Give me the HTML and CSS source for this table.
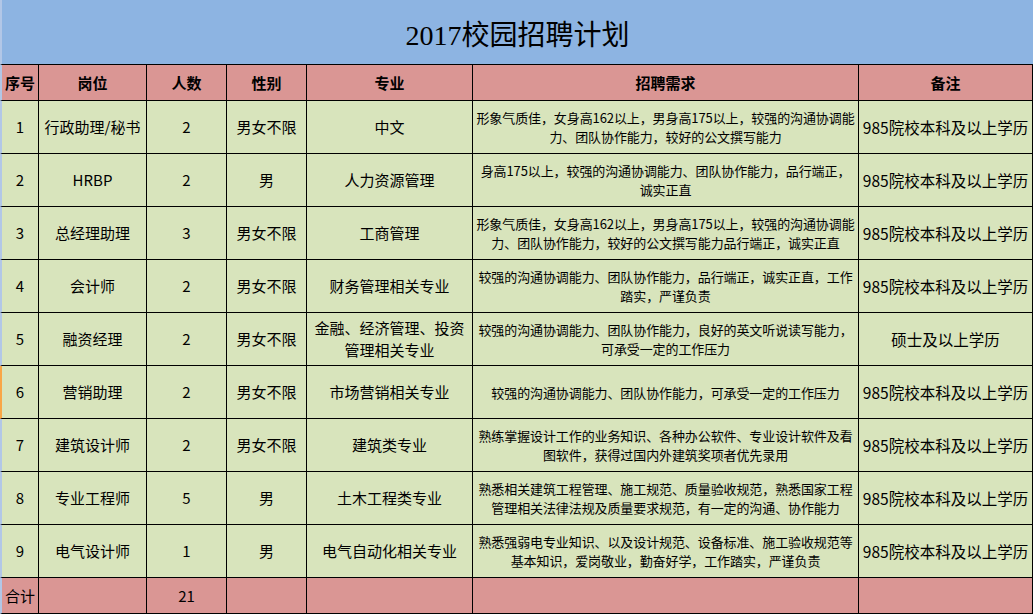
FILE: index.html
```html
<!DOCTYPE html>
<html lang="zh-CN">
<head>
<meta charset="utf-8">
<title>2017校园招聘计划</title>
<link rel="stylesheet" href="styles.css">
</head>
<body>
<div class="sheet">
  <div class="title">2017校园招聘计划</div>

  <div class="cell head first">序号</div>
  <div class="cell head">岗位</div>
  <div class="cell head">人数</div>
  <div class="cell head">性别</div>
  <div class="cell head">专业</div>
  <div class="cell head">招聘需求</div>
  <div class="cell head">备注</div>

  <div class="cell body first">1</div>
  <div class="cell body">行政助理/秘书</div>
  <div class="cell body">2</div>
  <div class="cell body">男女不限</div>
  <div class="cell body">中文</div>
  <div class="cell body req">形象气质佳，女身高162以上，男身高175以上，较强的沟通协调能<br>力、团队协作能力，较好的公文撰写能力</div>
  <div class="cell body note">985院校本科及以上学历</div>

  <div class="cell body first">2</div>
  <div class="cell body">HRBP</div>
  <div class="cell body">2</div>
  <div class="cell body">男</div>
  <div class="cell body">人力资源管理</div>
  <div class="cell body req">身高175以上，较强的沟通协调能力、团队协作能力，品行端正，<br>诚实正直</div>
  <div class="cell body note">985院校本科及以上学历</div>

  <div class="cell body first">3</div>
  <div class="cell body">总经理助理</div>
  <div class="cell body">3</div>
  <div class="cell body">男女不限</div>
  <div class="cell body">工商管理</div>
  <div class="cell body req">形象气质佳，女身高162以上，男身高175以上，较强的沟通协调能<br>力、团队协作能力，较好的公文撰写能力品行端正，诚实正直</div>
  <div class="cell body note">985院校本科及以上学历</div>

  <div class="cell body first">4</div>
  <div class="cell body">会计师</div>
  <div class="cell body">2</div>
  <div class="cell body">男女不限</div>
  <div class="cell body">财务管理相关专业</div>
  <div class="cell body req">较强的沟通协调能力、团队协作能力，品行端正，诚实正直，工作<br>踏实，严谨负责</div>
  <div class="cell body note">985院校本科及以上学历</div>

  <div class="cell body first">5</div>
  <div class="cell body">融资经理</div>
  <div class="cell body">2</div>
  <div class="cell body">男女不限</div>
  <div class="cell body two">金融、经济管理、投资<br>管理相关专业</div>
  <div class="cell body req">较强的沟通协调能力、团队协作能力，良好的英文听说读写能力，<br>可承受一定的工作压力</div>
  <div class="cell body note">硕士及以上学历</div>

  <div class="cell body first sel">6</div>
  <div class="cell body">营销助理</div>
  <div class="cell body">2</div>
  <div class="cell body">男女不限</div>
  <div class="cell body">市场营销相关专业</div>
  <div class="cell body req">较强的沟通协调能力、团队协作能力，可承受一定的工作压力</div>
  <div class="cell body note">985院校本科及以上学历</div>

  <div class="cell body first">7</div>
  <div class="cell body">建筑设计师</div>
  <div class="cell body">2</div>
  <div class="cell body">男女不限</div>
  <div class="cell body">建筑类专业</div>
  <div class="cell body req">熟练掌握设计工作的业务知识、各种办公软件、专业设计软件及看<br>图软件，获得过国内外建筑奖项者优先录用</div>
  <div class="cell body note">985院校本科及以上学历</div>

  <div class="cell body first">8</div>
  <div class="cell body">专业工程师</div>
  <div class="cell body">5</div>
  <div class="cell body">男</div>
  <div class="cell body">土木工程类专业</div>
  <div class="cell body req">熟悉相关建筑工程管理、施工规范、质量验收规范，熟悉国家工程<br>管理相关法律法规及质量要求规范，有一定的沟通、协作能力</div>
  <div class="cell body note">985院校本科及以上学历</div>

  <div class="cell body first">9</div>
  <div class="cell body">电气设计师</div>
  <div class="cell body">1</div>
  <div class="cell body">男</div>
  <div class="cell body">电气自动化相关专业</div>
  <div class="cell body req">熟悉强弱电专业知识、以及设计规范、设备标准、施工验收规范等<br>基本知识，爱岗敬业，勤奋好学，工作踏实，严谨负责</div>
  <div class="cell body note">985院校本科及以上学历</div>

  <div class="cell foot first">合计</div>
  <div class="cell foot"></div>
  <div class="cell foot">21</div>
  <div class="cell foot"></div>
  <div class="cell foot"></div>
  <div class="cell foot"></div>
  <div class="cell foot"></div>
</div>
</body>
</html>
```

FILE: styles.css
```css
* {
  box-sizing: border-box;
}

html, body {
  margin: 0;
  padding: 0;
  background: #ffffff;
}

body {
  font-family: "Noto Sans CJK SC", "Noto Sans", sans-serif;
  color: #000000;
}

.sheet {
  display: grid;
  width: 1033px;
  grid-template-columns: 39px 108px 80px 80px 166px 386px 174px;
  grid-template-rows: 65px 36px repeat(9, 53px) 36px;
}

.title {
  grid-column: 1 / -1;
  display: flex;
  align-items: center;
  justify-content: center;
  background: #8db4e2;
  border-left: 2px solid #b2c7e7;
  border-bottom: 1px solid #000000;
  font-family: "Liberation Serif", "Noto Sans CJK SC", serif;
  font-size: 28px;
  padding-top: 1px;
}

.cell {
  display: flex;
  align-items: center;
  justify-content: center;
  text-align: center;
  border-right: 1px solid #000000;
  border-bottom: 1px solid #000000;
  padding: 0 2px;
  overflow: visible;
  white-space: nowrap;
}

.cell.first {
  border-left: 2px solid #b2c7e7;
}

.cell.first.sel {
  border-left-color: #f9a646;
}

.head {
  background: #da9694;
  font-weight: bold;
  font-size: 15px;
}

.body {
  background: #d8e4bc;
  font-size: 15px;
  line-height: 18px;
}

.body.two {
  line-height: 22px;
}

.body.req {
  font-size: 13px;
  line-height: 19px;
  letter-spacing: -0.1px;
}

.body.note {
  font-size: 15.5px;
}

.foot {
  background: #da9694;
  font-size: 15px;
}
```
